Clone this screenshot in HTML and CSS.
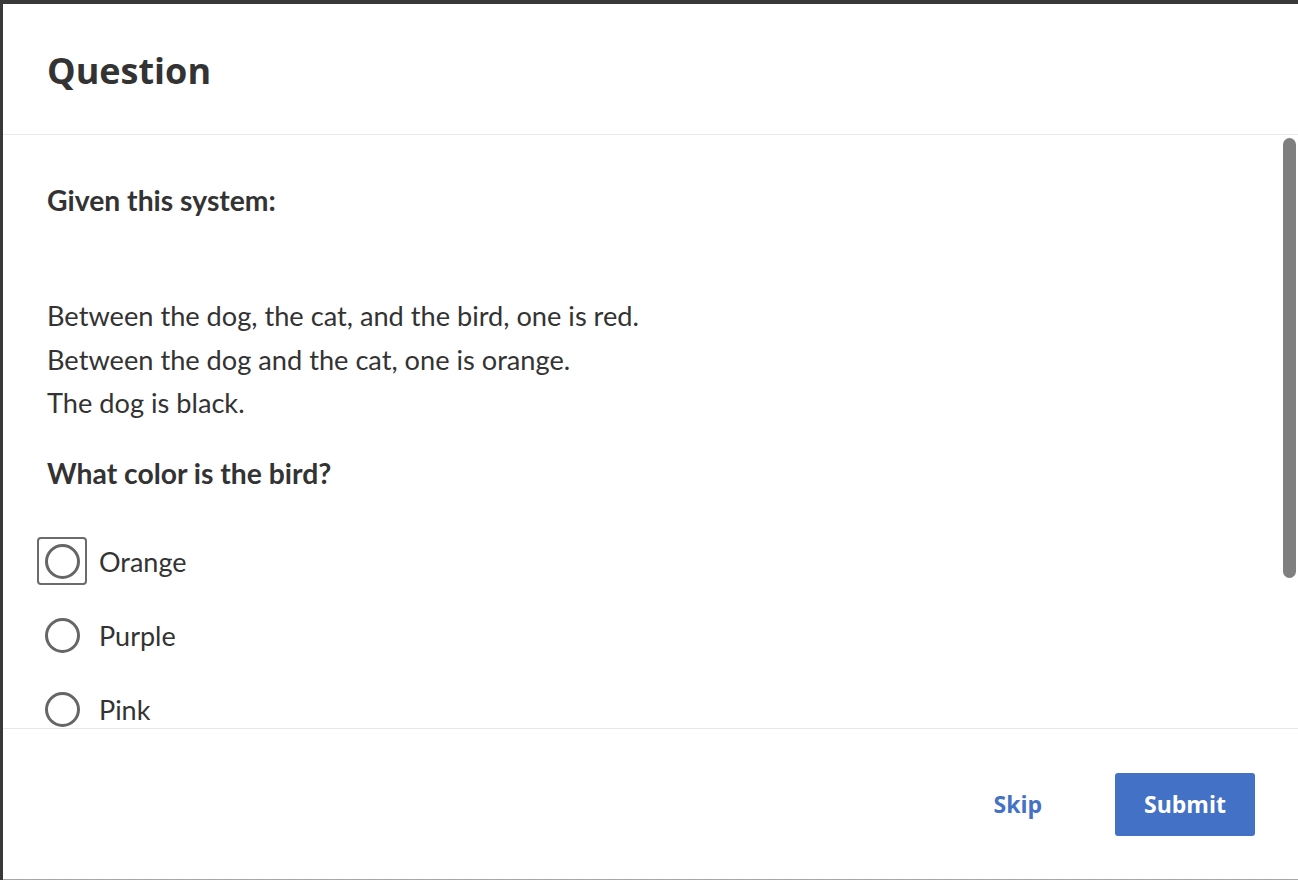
FILE: index.html
```html
<!DOCTYPE html>
<html lang="en">
<head>
<meta charset="utf-8">
<title>Question</title>
<link rel="stylesheet" href="styles.css">
</head>
<body>
<div class="modal">
  <header class="modal-header">
    <h1 class="modal-title">Question</h1>
  </header>
  <div class="modal-body-wrap">
    <div class="modal-body">
      <p class="lead">Given this system:</p>
      <div class="system">
        <p>Between the dog, the cat, and the bird, one is red.</p>
        <p>Between the dog and the cat, one is orange.</p>
        <p>The dog is black.</p>
      </div>
      <p class="prompt">What color is the bird?</p>
      <ul class="options">
        <li class="option focused"><span class="radio-wrap"><span class="radio"></span></span><span class="label">Orange</span></li>
        <li class="option"><span class="radio-wrap"><span class="radio"></span></span><span class="label">Purple</span></li>
        <li class="option"><span class="radio-wrap"><span class="radio"></span></span><span class="label">Pink</span></li>
      </ul>
    </div>
    <div class="scroll-thumb"></div>
  </div>
  <footer class="modal-footer">
    <button class="btn-link" type="button">Skip</button>
    <button class="btn-primary" type="button">Submit</button>
  </footer>
</div>
</body>
</html>
```
FILE: styles.css
```css
* { box-sizing: border-box; }

html, body {
  margin: 0;
  height: 880px;
  overflow: hidden;
}

body {
  background: #393939;
  padding: 4px 0 0 3px;
  font-family: "Lato", "Liberation Sans", sans-serif;
  color: #333;
}

.modal {
  height: 876px;
  background: #fff;
  border-bottom: 1px solid #a6a6ae;
  display: flex;
  flex-direction: column;
}

.modal-header {
  height: 131px;
  flex: none;
  border-bottom: 1px solid #e8e8e8;
  display: flex;
  align-items: center;
  padding: 4px 44px 0;
}

.modal-title {
  margin: 0;
  font-family: "Open Sans", sans-serif;
  font-weight: 700;
  font-size: 36px;
  color: #333;
  line-height: 1;
}

.modal-body-wrap {
  flex: 1;
  position: relative;
  overflow: hidden;
}

.modal-body {
  height: 100%;
  overflow: hidden;
  padding: 44px 44px 30px;
}

.scroll-thumb {
  position: absolute;
  top: 3px;
  right: 2px;
  width: 13px;
  height: 440px;
  border-radius: 7px;
  background: #7f7f7f;
}

.modal-body p { margin: 0; }

.lead, .prompt {
  font-weight: 700;
  font-size: 28.3px;
  line-height: 43px;
}

.system {
  margin-top: 72px;
  font-size: 27.2px;
  line-height: 43.5px;
}

.modal-body .prompt { margin-top: 27px; }

.options {
  list-style: none;
  margin: 42px 0 0;
  padding: 0;
  display: flex;
  flex-direction: column;
  gap: 25px;
}

.option {
  display: flex;
  align-items: center;
  gap: 12px;
  height: 49px;
  margin-left: -10px;
}

.radio-wrap {
  width: 50px;
  height: 48px;
  border: 2px solid transparent;
  border-radius: 4px;
  display: flex;
  align-items: center;
  justify-content: center;
}

.option.focused .radio-wrap { border-color: #6b6b6b; }

.radio {
  width: 35px;
  height: 35px;
  border: 3px solid #666;
  border-radius: 50%;
}

.label {
  font-size: 27px;
  color: #333;
}

.modal-footer {
  flex: none;
  height: 151px;
  border-top: 1px solid #e8e8e8;
  display: flex;
  align-items: center;
  justify-content: flex-end;
  padding: 0 43px 0 0;
  gap: 53px;
}

.btn-link, .btn-primary {
  font-family: "Open Sans", sans-serif;
  font-weight: 700;
  font-size: 23px;
  border: none;
  cursor: pointer;
}

.btn-link {
  background: none;
  color: #4472c4;
  padding: 0 20px;
}

.btn-primary {
  width: 140px;
  height: 63px;
  background: #4371c5;
  color: #fff;
  border-radius: 3px;
}
```
